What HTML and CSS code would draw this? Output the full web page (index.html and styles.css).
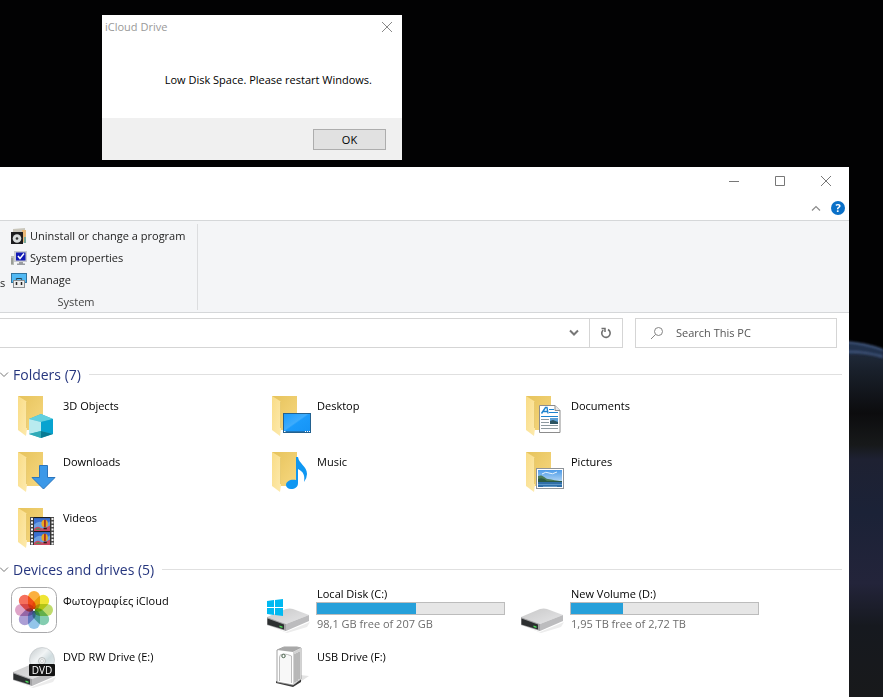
FILE: index.html
```html
<!DOCTYPE html>
<html lang="en">
<head>
    <meta charset="UTF-8">
    <meta name="viewport" content="width=device-width, initial-scale=1.0">
    <title>This PC</title>
    <link rel="stylesheet" href="styles.css">
</head>
<body>
    <!-- shared icon parts -->
    <svg class="defs" width="0" height="0" aria-hidden="true">
        <defs>
            <linearGradient id="flap" x1="0" y1="0" x2="1" y2="1">
                <stop offset="0" stop-color="#f9dc86"/>
                <stop offset="1" stop-color="#fdeaae"/>
            </linearGradient>
            <linearGradient id="back" x1="0" y1="0" x2="1" y2="1">
                <stop offset="0" stop-color="#e6c35c"/>
                <stop offset="1" stop-color="#f7d880"/>
            </linearGradient>
            <linearGradient id="screen" x1="0" y1="0" x2="1" y2="1">
                <stop offset="0" stop-color="#1a9bfa"/>
                <stop offset="0.45" stop-color="#3eacfc"/>
                <stop offset="0.5" stop-color="#1b9bfb"/>
                <stop offset="1" stop-color="#1593f5"/>
            </linearGradient>
            <linearGradient id="metal" x1="0" y1="0" x2="1" y2="1">
                <stop offset="0" stop-color="#c8c8c8"/>
                <stop offset="1" stop-color="#e6e6e8"/>
            </linearGradient>
            <linearGradient id="sky" x1="0" y1="0" x2="0" y2="1">
                <stop offset="0" stop-color="#4d9be8"/>
                <stop offset="1" stop-color="#e0f0fa"/>
            </linearGradient>
            <linearGradient id="disc" x1="0" y1="0" x2="1" y2="1">
                <stop offset="0" stop-color="#c3c9cb"/>
                <stop offset="0.4" stop-color="#f1f4f5"/>
                <stop offset="0.6" stop-color="#d0dcdf"/>
                <stop offset="1" stop-color="#eceeef"/>
            </linearGradient>
            <symbol id="folder" viewBox="0 0 48 48">
                <path d="M7 4h25v34H15z" fill="url(#back)"/>
                <path d="M7 4l8 5q1 1 1 2v26l-1 7-8-6z" fill="url(#flap)"/>
                <path d="M15.500 10v26" stroke="#dcb94f" stroke-width=".6"/>
            </symbol>
            <symbol id="drive" viewBox="0 0 48 48">
                <path d="M2 38l19 7 24-10-3 5-20 6z" fill="#ececec"/>
                <path d="M2 30l19-8q4-1 7 0l16 6-23 9z" fill="url(#metal)"/>
                <path d="M21 37l23-9v6l-23 10z" fill="#bcbcbe"/>
                <path d="M2 30l19 7v7L2 38z" fill="#a2a2a4"/>
                <path d="M2.500 31.500L19 37.500v5l-16.500-5z" fill="#2c2f30"/>
                <path d="M14.500 38.500l3 1v1.500l-3-1z" fill="#4ce05a"/>
            </symbol>
            <symbol id="sunset" viewBox="0 0 15 12">
                <rect width="15" height="12" fill="#3a6fd0"/>
                <path d="M0 6q4-4 8-2t7-1v9H0z" fill="#6c9fe2"/>
                <path d="M0 10q3-3 6-1t9-2v5H0z" fill="#c94a62"/>
                <path d="M1 11q3-3 6 0z" fill="#3c9a4e"/>
                <ellipse cx="10" cy="5" rx="3" ry="3.500" fill="#e9a823"/>
                <path d="M9.500 1.500h1.500v7H9.500z" fill="#a3231e"/>
                <path d="M9 9h3v1.500H9z" fill="#2d1b12"/>
            </symbol>
        </defs>
    </svg>

    <svg class="wallpaper" viewBox="0 0 40 370" preserveAspectRatio="none" aria-hidden="true">
        <defs>
            <linearGradient id="space" x1="0" y1="0" x2="0" y2="1">
                <stop offset="0" stop-color="#242f42"/>
                <stop offset="0.08" stop-color="#19202b"/>
                <stop offset="0.2" stop-color="#0c0c0e"/>
                <stop offset="0.29" stop-color="#17191a"/>
                <stop offset="0.33" stop-color="#1e2132"/>
                <stop offset="0.48" stop-color="#1b2237"/>
                <stop offset="0.68" stop-color="#23243a"/>
                <stop offset="0.8" stop-color="#16191f"/>
                <stop offset="1" stop-color="#18191b"/>
            </linearGradient>
            <filter id="soft" x="-20%" y="-50%" width="140%" height="200%">
                <feGaussianBlur stdDeviation="1"/>
            </filter>
        </defs>
        <path d="M0 12q22 1 40 8v350H0z" fill="url(#space)"/>
        <g filter="url(#soft)">
            <path d="M0 11q22 1 40 8v10Q22 23 0 25z" fill="#22304d"/>
            <path d="M0 12q22 1 40 8M0 22q20-1 40 5" fill="none" stroke="#3f5479" stroke-width="2"/>
        </g>
    </svg>

    <main class="explorer">
        <header class="titlebar">
            <button class="win-btn" aria-label="Minimize">
                <svg width="10" height="10" viewBox="0 0 10 10"><path d="M0 5.500h10"/></svg>
            </button>
            <button class="win-btn" aria-label="Maximize">
                <svg width="10" height="10" viewBox="0 0 10 10"><path d="M.5.5h9v9h-9z"/></svg>
            </button>
            <button class="win-btn" aria-label="Close">
                <svg width="10" height="10" viewBox="0 0 10 10"><path d="M0 0l10 10M10 0L0 10"/></svg>
            </button>
        </header>
        <div class="tab-row">
            <button class="icon-btn" aria-label="Collapse ribbon">
                <svg width="10" height="6" viewBox="0 0 10 6"><path d="M1 5.500l4-4 4 4" fill="none" stroke="#8b8b8b" stroke-width="1.200"/></svg>
            </button>
            <button class="help-btn" aria-label="Help">?</button>
        </div>

        <section class="ribbon">
            <span class="cut-label">s</span>
            <div class="group">
                <button class="ribbon-item">
                    <svg width="16" height="16" viewBox="0 0 16 16">
                        <path d="M2 1l12-1v15H2z" fill="#c9c6bb"/>
                        <path d="M11 2h4v12h-4z" fill="#e8b878"/>
                        <path d="M13 9h2v6h-2z" fill="#79aa9b"/>
                        <rect x="0" y="4" width="12" height="12" fill="#1c1c1e"/>
                        <circle cx="6" cy="10.500" r="4.300" fill="#d8dcdc"/>
                        <circle cx="6" cy="10.500" r="1.300" fill="#333"/>
                    </svg>
                    Uninstall or change a program
                </button>
                <button class="ribbon-item">
                    <svg width="16" height="16" viewBox="0 0 16 16">
                        <rect x="0" y="6" width="3" height="9" fill="#b9bcb6"/>
                        <path d="M1 8v6" stroke="#7d807b"/>
                        <rect x="3" y="1" width="13" height="11" fill="#c9cbd0"/>
                        <rect x="5" y="2.500" width="9.500" height="8" fill="#1018b4"/>
                        <path d="M7 6l2 2.500 4-5" fill="none" stroke="#fff" stroke-width="1.500"/>
                        <path d="M8 12h4v1.500h2V15H6v-1.500h2z" fill="#9a9da2"/>
                    </svg>
                    System properties
                </button>
                <button class="ribbon-item">
                    <svg width="16" height="16" viewBox="0 0 16 16">
                        <rect x=".5" y="1.500" width="15" height="9" fill="#51b9f4" stroke="#31749f"/>
                        <path d="M5 7.500l1-1h4l1 1" fill="none" stroke="#27414f" stroke-width="1.200"/>
                        <rect x="2.500" y="8.500" width="11" height="7" fill="#eceded" stroke="#8b8f92"/>
                        <path d="M5.500 10v3M10.500 10v3" stroke="#222" stroke-width="1.500"/>
                    </svg>
                    Manage
                </button>
                <div class="group-name">System</div>
            </div>
        </section>

        <div class="nav-row">
            <div class="address">
                <input class="address-input" type="text" aria-label="Address">
                <button class="icon-btn address-drop" aria-label="Previous locations">
                    <svg width="10" height="8" viewBox="0 0 10 8"><path d="M1 1.500l4 4 4-4" fill="none" stroke="#777" stroke-width="2"/></svg>
                </button>
                <button class="icon-btn refresh" aria-label="Refresh">
                    <svg width="12" height="12" viewBox="0 0 12 12">
                        <path d="M8 2.500A4.200 4.200 0 1 1 3.200 3" fill="none" stroke="#6f6f6f" stroke-width="1.600"/>
                        <path d="M1.500 1.500H5V5" fill="none" stroke="#6f6f6f" stroke-width="1.500"/>
                    </svg>
                </button>
            </div>
            <label class="search">
                <svg width="14" height="14" viewBox="0 0 14 14">
                    <circle cx="8.500" cy="5.500" r="4" fill="none" stroke="#858585"/>
                    <path d="M5.500 8.500L1 13" stroke="#858585"/>
                </svg>
                <input type="text" placeholder="Search This PC" aria-label="Search This PC">
            </label>
        </div>

        <section class="section">
            <h2>
                <svg width="9" height="6" viewBox="0 0 9 6"><path d="M0 .5l4 4 4-4" fill="none" stroke="#777"/></svg>
                Folders (7)
            </h2>
            <div class="tiles">
                <a class="tile" href="#">
                    <svg class="tile-icon" viewBox="0 0 48 48">
                        <use href="#folder"/>
                        <path d="M30 22l12 5v15l-12 4-12-4V27z" fill="#36b5cc"/>
                        <path d="M18 27l12-5 12 5-12 3z" fill="#62d0df"/>
                        <path d="M18 27l12 3v9l-12 3z" fill="#b9ebef"/>
                        <path d="M42 27l-12 3v9l12 3z" fill="#07a3d0"/>
                        <path d="M18 42l12-3v7z" fill="#30aab7"/>
                        <path d="M42 42l-12-3v7z" fill="#087b94"/>
                    </svg>
                    <span class="tile-name">3D Objects</span>
                </a>
                <a class="tile" href="#">
                    <svg class="tile-icon" viewBox="0 0 48 48">
                        <use href="#folder"/>
                        <rect x="18.500" y="21.500" width="27" height="19" fill="url(#screen)" stroke="#23618f"/>
                        <path d="M19 39.500h26" stroke="#2275b5"/>
                        <path d="M19 39.500h1.500M40 39.500h1M42 39.500h1M44 39.500h1" stroke="#fff"/>
                    </svg>
                    <span class="tile-name">Desktop</span>
                </a>
                <a class="tile" href="#">
                    <svg class="tile-icon" viewBox="0 0 48 48">
                        <use href="#folder"/>
                        <path d="M20.500 13.500H36l5 5v22H20.500z" fill="#fff" stroke="#8c8c8c"/>
                        <path d="M36 13.500v5h5" fill="#e8e8e8" stroke="#8c8c8c"/>
                        <path d="M22.500 21.500l4-6h1.500l1 6M24 19.500h5" fill="none" stroke="#1d83cf" stroke-width="1.400"/>
                        <path d="M30 17.500h5M30 20.500h9M22 24.500h17" stroke="#1d83cf"/>
                        <path d="M22 27.500h8M22 30.500h8M22 33.500h17M22 36.500h17" stroke="#8e9aa0"/>
                        <rect x="31" y="26" width="8" height="6" fill="#5c9fd6"/>
                        <path d="M31 29l3-1 5 2v2h-8z" fill="#2a5360"/>
                    </svg>
                    <span class="tile-name">Documents</span>
                </a>
                <a class="tile" href="#">
                    <svg class="tile-icon" viewBox="0 0 48 48">
                        <use href="#folder"/>
                        <path d="M28.500 17.500h8v12h7.500L32.500 41 21 29.500h7.500z" fill="#3b98e8" stroke="#2a75bd"/>
                    </svg>
                    <span class="tile-name">Downloads</span>
                </a>
                <a class="tile" href="#">
                    <svg class="tile-icon" viewBox="0 0 48 48">
                        <use href="#folder"/>
                        <path d="M31 9h2c1 7 9 9 9 17q0 4-3 8c1-6 0-10-6-13v14c0 4-3 6-7 6-3 0-5-2-5-4 0-4 5-6 10-5z" fill="#0f97f2"/>
                    </svg>
                    <span class="tile-name">Music</span>
                </a>
                <a class="tile" href="#">
                    <svg class="tile-icon" viewBox="0 0 48 48">
                        <use href="#folder"/>
                        <rect x="17.500" y="20.500" width="27" height="20" fill="#fff" stroke="#8e9399"/>
                        <rect x="19" y="22" width="24" height="17" fill="url(#sky)"/>
                        <path d="M19 28c5-2 6 2 10 3s9 1 14 3H19z" fill="#4b7a55"/>
                        <path d="M19 31q5-2 9 2h15v1H19z" fill="#2b5a42"/>
                        <path d="M19 34h24v5H19z" fill="#2f6ea8"/>
                        <path d="M19 36.500h24M24 38.500h14" stroke="#74a9d2" stroke-width=".7"/>
                        <path d="M23 26q4-3 7-1t8-1" fill="none" stroke="#e6f3fd"/>
                    </svg>
                    <span class="tile-name">Pictures</span>
                </a>
                <a class="tile" href="#">
                    <svg class="tile-icon" viewBox="0 0 48 48">
                        <use href="#folder"/>
                        <rect x="19" y="13" width="24" height="28" fill="#4b4b4b"/>
                        <path d="M21 14v27M41.500 14v27" stroke="#f2f2f2" stroke-width="2" stroke-dasharray="2 1.500"/>
                        <rect x="22.500" y="13" width="17" height="28" fill="#1b1b1b"/>
                        <use href="#sunset" x="23" y="14" width="16" height="13"/>
                        <use href="#sunset" x="23" y="28" width="16" height="13"/>
                    </svg>
                    <span class="tile-name">Videos</span>
                </a>
            </div>
        </section>

        <section class="section">
            <h2>
                <svg width="9" height="6" viewBox="0 0 9 6"><path d="M0 .5l4 4 4-4" fill="none" stroke="#777"/></svg>
                Devices and drives (5)
            </h2>
            <div class="tiles">
                <a class="tile" href="#">
                    <svg class="tile-icon" viewBox="0 0 48 48">
                        <rect x=".5" y=".5" width="45" height="45" rx="9" fill="#fff" stroke="#a9a9ab"/>
                        <g class="petals">
                            <rect x="17" y="4" width="12" height="19" rx="6" fill="#fbb040"/>
                            <rect x="17" y="4" width="12" height="19" rx="6" fill="#efe534" transform="rotate(45 23 23)"/>
                            <rect x="17" y="4" width="12" height="19" rx="6" fill="#bfdb6c" transform="rotate(90 23 23)"/>
                            <rect x="17" y="4" width="12" height="19" rx="6" fill="#84cdb0" transform="rotate(135 23 23)"/>
                            <rect x="17" y="4" width="12" height="19" rx="6" fill="#93c5ea" transform="rotate(180 23 23)"/>
                            <rect x="17" y="4" width="12" height="19" rx="6" fill="#ab9ed4" transform="rotate(225 23 23)"/>
                            <rect x="17" y="4" width="12" height="19" rx="6" fill="#dfa4c8" transform="rotate(270 23 23)"/>
                            <rect x="17" y="4" width="12" height="19" rx="6" fill="#f6705c" transform="rotate(315 23 23)"/>
                        </g>
                        <circle cx="23" cy="23" r="1" fill="#fff"/>
                    </svg>
                    <span class="tile-name">Φωτογραφίες iCloud</span>
                </a>
                <a class="tile drive" href="#">
                    <svg class="tile-icon" viewBox="0 0 48 48">
                        <use href="#drive"/>
                        <path d="M2 14l7-1v7H2zM10 13l8-1v8h-8zM2 21h7v7l-7-1zM10 21h8v8l-8-1z" fill="#00b9f1"/>
                    </svg>
                    <span class="drive-info">
                        <span class="drive-name">Local Disk (C:)</span>
                        <span class="bar"><span class="bar-fill" style="width: 53%"></span></span>
                        <span class="drive-space">98,1 GB free of 207 GB</span>
                    </span>
                </a>
                <a class="tile drive" href="#">
                    <svg class="tile-icon" viewBox="0 0 48 48"><use href="#drive"/></svg>
                    <span class="drive-info">
                        <span class="drive-name">New Volume (D:)</span>
                        <span class="bar"><span class="bar-fill" style="width: 28%"></span></span>
                        <span class="drive-space">1,95 TB free of 2,72 TB</span>
                    </span>
                </a>
                <a class="tile" href="#">
                    <svg class="tile-icon" viewBox="0 0 48 48">
                        <use href="#drive" y="-1"/>
                        <circle cx="31" cy="17" r="12.500" fill="url(#disc)" stroke="#c2c6c8" stroke-width=".7"/>
                        <circle cx="31" cy="18" r="3.500" fill="#eceeee" stroke="#a9adaf" stroke-width=".7"/>
                        <circle cx="31" cy="18" r="1.500" fill="#fff" stroke="#a9adaf" stroke-width=".5"/>
                        <rect x="18" y="21" width="26" height="12" rx="1" fill="#141414"/>
                        <text class="disc-label" x="31" y="31" text-anchor="middle">DVD</text>
                    </svg>
                    <span class="tile-name">DVD RW Drive (E:)</span>
                </a>
                <a class="tile" href="#">
                    <svg class="tile-icon" viewBox="0 0 48 48">
                        <path d="M29 43l15-10-9-1z" fill="#e3e3e3"/>
                        <path d="M11 38l17 4 8-6v3l-8 5-17-4z" fill="#3b3b3b"/>
                        <path d="M12 7l7-3h13l4 1v31l-8 6-16-3z" fill="#fff" stroke="#8a8a8a" stroke-width=".8"/>
                        <path d="M12 7l7-3h13l4 1-8 4z" fill="#a8a8a8"/>
                        <path d="M28 9l8-4v31l-8 6z" fill="#d3d3d3"/>
                        <path d="M30 11v28M32 10v28M34 9v27" stroke="#8f8f8f" stroke-width=".8"/>
                        <path d="M14.500 38V14q0-3 4-3t8 2v27" fill="#f8f8f8" stroke="#adadad" stroke-width=".8"/>
                        <circle cx="18.500" cy="13" r="1.700" fill="#fff" stroke="#466049"/>
                    </svg>
                    <span class="tile-name">USB Drive (F:)</span>
                </a>
            </div>
        </section>
    </main>

    <div class="dialog" role="dialog" aria-labelledby="dialog-title">
        <div class="dialog-title">
            <span id="dialog-title">iCloud Drive</span>
            <button class="icon-btn dialog-close" aria-label="Close">
                <svg width="10" height="10" viewBox="0 0 10 10"><path d="M0 0l10 10M10 0L0 10" stroke="#888"/></svg>
            </button>
        </div>
        <p class="dialog-text">Low Disk Space. Please restart Windows.</p>
        <div class="dialog-footer">
            <button class="ok-btn">OK</button>
        </div>
    </div>
</body>
</html>
```
FILE: styles.css
```css
* {
    box-sizing: border-box;
}

body {
    margin: 0;
    min-height: 100vh;
    position: relative;
    overflow: hidden;
    background-color: #020203;
    color: #000;
    font-family: "Open Sans", "Noto Sans", sans-serif;
    font-size: 11px;
    line-height: 16px;
}

button,
input {
    font: inherit;
    color: inherit;
    background: none;
    border: none;
    padding: 0;
}

svg {
    display: block;
    flex: none;
}

.defs {
    position: absolute;
}

.wallpaper {
    position: absolute;
    right: 0;
    top: 330px;
    bottom: 0;
    width: 40px;
    height: calc(100% - 330px);
}

/* explorer window */
.explorer {
    position: absolute;
    top: 167px;
    left: 0;
    right: 34px;
    bottom: 0;
    overflow: hidden;
    background-color: #fff;
}

.titlebar {
    display: flex;
    justify-content: flex-end;
    height: 28px;
}

.win-btn {
    display: flex;
    align-items: center;
    justify-content: center;
    width: 46px;
}

.win-btn path {
    fill: none;
    stroke: #777;
}

.tab-row {
    display: flex;
    align-items: center;
    justify-content: flex-end;
    gap: 10px;
    height: 25px;
    padding-right: 4px;
}

.icon-btn {
    display: flex;
    align-items: center;
    justify-content: center;
}

.help-btn {
    width: 14px;
    height: 14px;
    border-radius: 50%;
    background-color: #0a70c8;
    color: #fff;
    font-weight: bold;
    line-height: 14px;
    text-align: center;
}

.ribbon {
    display: flex;
    padding: 3px 0 2px;
    border-top: 1px solid #d5d7d9;
    border-bottom: 1px solid #d5d7d9;
    background-color: #f4f5f7;
    color: #222;
}

.cut-label {
    width: 11px;
    padding-top: 51px;
}

.group {
    width: 187px;
    border-right: 1px solid #dcdddf;
}

.ribbon-item {
    display: flex;
    align-items: center;
    gap: 3px;
    height: 22px;
    white-space: nowrap;
}

.ribbon-item:first-child {
    margin-top: 1px;
}

.group-name {
    padding-right: 56px;
    padding-top: 3px;
    text-align: center;
    color: #444;
}

/* address and search */
.nav-row {
    display: flex;
    gap: 12px;
    padding: 5px 12px 0 0;
}

.address {
    display: flex;
    flex: 1;
    height: 30px;
    border: 1px solid #d5d5d5;
    border-left: none;
}

.address-input {
    flex: 1;
    min-width: 0;
}

.address-drop {
    width: 31px;
}

.refresh {
    width: 33px;
    border-left: 1px solid #d5d5d5;
}

.search {
    display: flex;
    align-items: center;
    gap: 12px;
    width: 202px;
    height: 30px;
    padding: 0 14px;
    border: 1px solid #d5d5d5;
}

.search input {
    flex: 1;
    min-width: 0;
}

.search input::placeholder {
    color: #555;
    opacity: 1;
}

/* content */
.section {
    padding-right: 7px;
}

.section:first-of-type {
    padding-top: 13px;
}

.nav-row + .section {
    padding-top: 13px;
}

.section h2 {
    display: flex;
    align-items: center;
    gap: 4px;
    margin: 0;
    height: 27px;
    font-size: 14px;
    font-weight: normal;
    color: #26367e;
}

.section h2::after {
    content: "";
    flex: 1;
    height: 1px;
    margin-left: 4px;
    background-color: #e0e0e0;
}

.tiles {
    display: grid;
    grid-template-columns: repeat(auto-fill, 254px);
    grid-auto-rows: 56px;
    padding-left: 7px;
}

.tile {
    display: flex;
    gap: 4px;
    padding: 4px;
    color: #000;
    text-decoration: none;
}

.tile-icon {
    width: 48px;
    height: 48px;
}

.tile-name {
    padding-top: 6px;
}

.drive {
    gap: 3px;
}

.drive-info {
    display: flex;
    flex-direction: column;
    width: 189px;
    margin-top: -1px;
}

.drive-name,
.drive-space {
    padding-left: 1px;
}

.bar {
    height: 13px;
    border: 1px solid #bcbcbc;
    background-color: #e6e6e6;
}

.bar-fill {
    display: block;
    height: 100%;
    background-color: #26a0da;
}

.drive-space {
    padding-top: 1px;
    color: #6d6d6d;
}

.petals {
    isolation: isolate;
}

.petals rect {
    mix-blend-mode: multiply;
}

.disc-label {
    fill: #fff;
    font-size: 10px;
}

/* dialog */
.dialog {
    position: absolute;
    top: 15px;
    left: 102px;
    width: 300px;
    background-color: #fff;
}

.dialog-title {
    display: flex;
    align-items: center;
    justify-content: space-between;
    height: 24px;
    padding-left: 3px;
    color: #999;
}

.dialog-close {
    width: 30px;
    height: 24px;
}

.dialog-text {
    margin: 0;
    padding: 33px 30px 30px;
    text-align: right;
}

.dialog-footer {
    display: flex;
    justify-content: flex-end;
    padding: 11px 16px 10px;
    background-color: #f0f0f0;
}

.ok-btn {
    width: 73px;
    height: 21px;
    border: 1px solid #adadad;
    background-color: #e1e1e1;
}
```
